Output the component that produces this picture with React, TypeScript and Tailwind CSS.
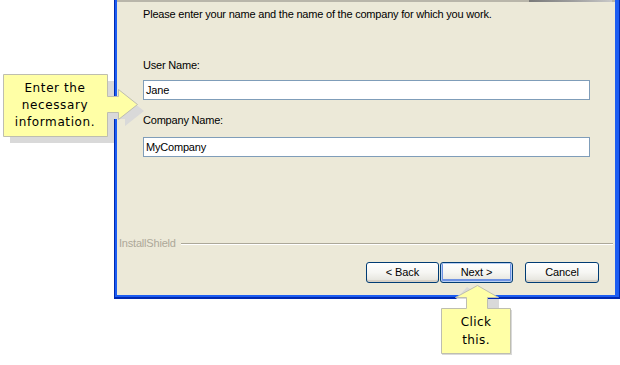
import React from 'react';

const dialogFont = { fontFamily: '"Liberation Sans", Arial, sans-serif' };
const calloutFont = { fontFamily: '"DejaVu Sans", Verdana, sans-serif' };

interface XpButtonProps {
  label: string;
  focused?: boolean;
  width: string;
}

const XpButton: React.FC<XpButtonProps> = ({ label, focused, width }) => (
  <div
    className={`${width} h-[21px] rounded-[3px] border border-[#003C74] bg-linear-to-b from-white via-[#F6F6F3] to-[#E3E2DA] flex items-center justify-center text-[11px] tracking-[-0.1px] text-black ${
      focused ? 'shadow-[inset_0_0_0_1px_#B9CFF3,inset_0_-1px_0_2px_#6F92E2]' : 'shadow-[inset_0_-2px_0_0_#D6D0C5]'
    }`}
  >
    {label}
  </div>
);

const App: React.FC = () => {
  return (
    <div className="relative w-[620px] h-[365px] bg-white overflow-hidden" style={dialogFont}>
      {/* wizard window */}
      <div className="ml-[114px] w-[506px] h-[299px] bg-[#0029B0] pl-[1px] pr-[1px] pb-[2px]">
        <div className="h-full bg-[#1C5DF2] pl-[2px] pr-[4px] pb-[2px]">
          <div className="h-full bg-[#ECE9D8] flex flex-col tracking-[-0.2px]">
            <div className="h-[2px] flex">
              <div className="w-[412px] bg-[#B9B6AA]" />
              <div className="w-[83px] bg-linear-to-r from-[#7A7A7A] via-[#9C9C9C] to-[#C8C8C8]" />
              <div className="flex-1 bg-[#B9B6AA]" />
            </div>

            <p className="mt-[6px] pl-[26px] text-[11px] leading-[13px] text-black">
              Please enter your name and the name of the company for which you work.
            </p>

            <label className="mt-[38px] pl-[26px] text-[11px] leading-[13px] text-black">User Name:</label>
            <div className="mt-[8px] ml-[26px] w-[447px] h-[20px] border border-[#7F9DB9] bg-white pl-[2px] flex items-center text-[11px] text-black">
              Jane
            </div>

            <label className="mt-[14px] pl-[26px] text-[11px] leading-[13px] text-black">Company Name:</label>
            <div className="mt-[10px] ml-[26px] w-[447px] h-[20px] border border-[#7F9DB9] bg-white pl-[2px] flex items-center text-[11px] text-black">
              MyCompany
            </div>

            <div className="mt-[80px] pl-[2px] pr-[2px] h-[13px] flex items-center">
              <span className="text-[11px] leading-[13px] text-[#ACA899]">InstallShield</span>
              <div className="flex-1 ml-[5px] flex flex-col">
                <div className="h-[1px] bg-[#ACA899]" />
                <div className="h-[1px] bg-white" />
              </div>
            </div>

            <div className="mt-[12px] pr-[16px] flex justify-end">
              <XpButton label="< Back" width="w-[73px]" />
              <div className="w-[1px]" />
              <XpButton label="Next >" width="w-[73px]" focused />
              <div className="w-[12px]" />
              <XpButton label="Cancel" width="w-[74px]" />
            </div>
          </div>
        </div>
      </div>

      {/* callout: enter the necessary information */}
      <div className="absolute left-0 top-0 w-[150px] h-[150px]">
        <svg width="150" height="150" className="absolute left-0 top-0">
          <path
            d="M10 81 H114 V103 H125 V96 L144 111 L125 126 V119 H114 V143 H10 Z"
            fill="#D9D9D9"
          />
          <path
            d="M3.5 74.5 H107.5 V96.5 H118.5 V89.5 L137.5 104.5 L118.5 119.5 V112.5 H107.5 V136.5 H3.5 Z"
            fill="#FFFFA6"
            stroke="#BEBEB0"
          />
        </svg>
        <div
          className="absolute left-[3px] top-[80px] w-[104px] text-center text-[12px] leading-[17px] tracking-[0.6px] text-black"
          style={calloutFont}
        >
          Enter the
          <br />
          necessary
          <br />
          information.
        </div>
      </div>

      {/* callout: click this */}
      <div className="absolute left-[430px] top-[280px] w-[100px] h-[85px]">
        <svg width="100" height="85" className="absolute left-0 top-0">
          <path
            d="M43 12 L62 24 H75 V35 H88 V80 H18 V35 H43 V24 H32 Z"
            fill="#D9D9D9"
            transform="translate(-6 -5)"
          />
          <path
            d="M47.5 5.5 L68.5 17.5 H57.5 V28.5 H80.5 V73.5 H11.5 V28.5 H36.5 V17.5 H25.5 Z"
            fill="#FFFFA6"
            stroke="#BEBEB0"
          />
        </svg>
        <div
          className="absolute left-[11px] top-[33px] w-[70px] text-center text-[12px] leading-[18px] tracking-[0.4px] text-black"
          style={calloutFont}
        >
          Click
          <br />
          this.
        </div>
      </div>
    </div>
  );
};

export default App;
